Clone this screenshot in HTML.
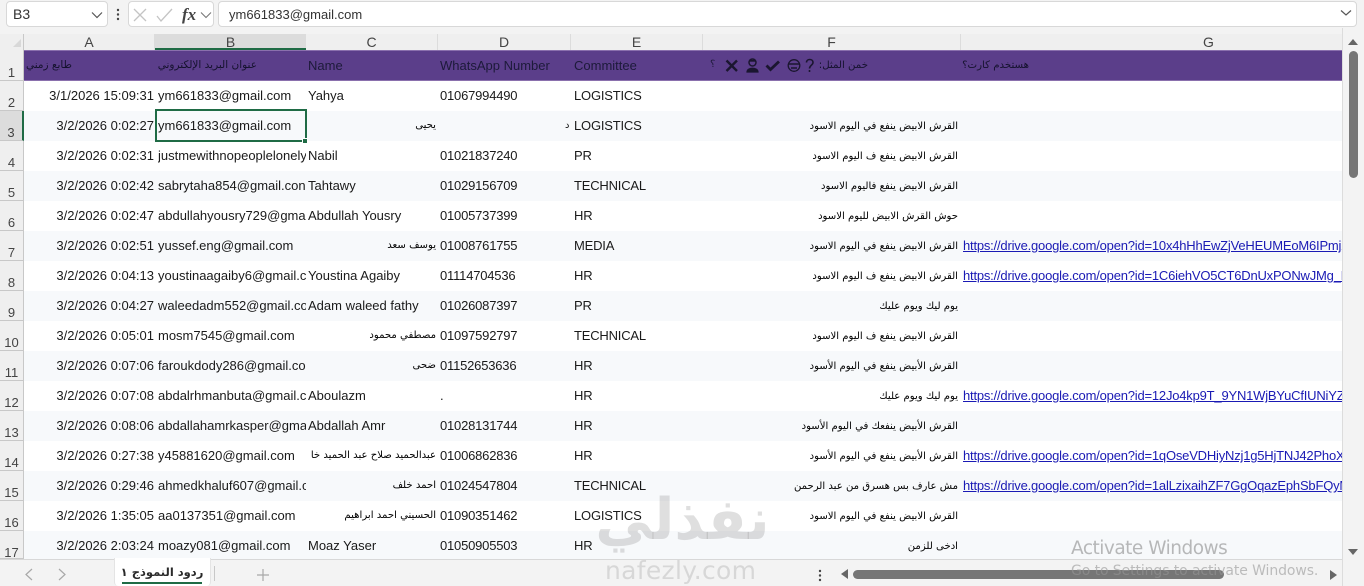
<!DOCTYPE html>
<html lang="en"><head><meta charset="utf-8"><title>Sheet</title>
<style>
html,body{margin:0;padding:0;width:1364px;height:586px;overflow:hidden;background:#f3f3f3;font-family:"Liberation Sans",sans-serif;color:#1a1a1a}
*{box-sizing:border-box}
.abs,.box,.ch,.rh,.r,.c{position:absolute}
.box{background:#fff;border:1px solid #d8d8d8;border-radius:4px;top:1px;height:26px}
.ch{top:34px;height:17px;background:#efefef;color:#444;font-size:14px;line-height:16px;text-align:center;border-right:1px solid #dcdcdc}
.rh{left:0;width:24px;height:30px;background:#efefef;color:#444;font-size:13px;text-align:center;line-height:14px;padding-top:15px;border-bottom:1px solid #c8c8c8;border-right:1px solid #c8c8c8}
.r{left:24px;width:1318px;height:30px;background:#fff;overflow:hidden}
.r.t{background:#f7f9fb}
.c{top:0;height:30px;line-height:29px;font-size:13px;white-space:nowrap;overflow:hidden;color:#1a1a1a}
.a{left:0;width:130px;text-align:right}
.b{left:134px;width:148px}
.cc{left:284px;width:128px}
.cr{left:282px;width:130px;text-align:right;direction:rtl;font-family:"DejaVu Sans",sans-serif;font-size:10.100px;line-height:30px;color:#000}
.d{left:416px;width:130px;letter-spacing:-.2px}
.e{left:550px;width:130px;letter-spacing:-.2px}
.f{left:680px;width:254px;text-align:right;direction:rtl;font-family:"DejaVu Sans",sans-serif;font-size:10.100px;line-height:31px;color:#000}
.g{left:939px;width:379px;color:#1a1ab4;text-decoration:underline;letter-spacing:-.2px}
.h{color:#1d1a3a;line-height:29px;font-size:13px}
.hr{font-family:"DejaVu Sans",sans-serif;font-size:10.500px;direction:rtl;text-align:right;white-space:nowrap;color:#15122e}
</style></head><body>

<!-- formula bar -->
<div class="box" style="left:6px;width:102px"></div>
<div class="abs" style="left:13px;top:6px;font-size:14px;color:#333">B3</div>
<svg class="abs" style="left:90px;top:10px" width="14" height="10"><path d="M2 2.500 L7 7.500 L12 2.500" fill="none" stroke="#555" stroke-width="1.200"/></svg>
<svg class="abs" style="left:114px;top:8px" width="8" height="14"><g fill="#444"><circle cx="4" cy="2" r="1.200"/><circle cx="4" cy="6.500" r="1.200"/><circle cx="4" cy="11" r="1.200"/></g></svg>
<div class="box" style="left:128px;width:86px"></div>
<svg class="abs" style="left:132px;top:6px" width="42" height="18"><path d="M2 3 L14 15 M14 3 L2 15 M25 10 L29 15 L40 3" fill="none" stroke="#c4c4c4" stroke-width="1.300"/></svg>
<div class="abs" style="left:182px;top:5px;font:italic bold 17px/19px 'Liberation Serif',serif;color:#444">fx</div>
<svg class="abs" style="left:199px;top:10px" width="14" height="10"><path d="M2 2.500 L7 7.500 L12 2.500" fill="none" stroke="#777" stroke-width="1.100"/></svg>
<div class="box" style="left:218px;width:1139px"></div>
<div class="abs" style="left:229px;top:7px;font-size:13px;color:#333">ym661833@gmail.com</div>
<svg class="abs" style="left:1339px;top:8px" width="14" height="10"><path d="M2 2.500 L7 7 L12 2.500" fill="none" stroke="#555" stroke-width="1.200"/></svg>

<!-- column headers -->
<div class="abs" style="left:0;top:34px;width:24px;height:17px;background:#efefef;border-right:1px solid #c8c8c8"></div>
<svg class="abs" style="left:13px;top:39px" width="9" height="9"><path d="M8 0V8H0Z" fill="#d8d8d8"/></svg>
<div class="ch" style="left:24px;width:131px">A</div>
<div class="ch" style="left:155px;width:151px;height:16px;background:#dcdcdc;border-bottom:2px solid #1f6b45;border-right:0">B</div>
<div class="ch" style="left:306px;width:132px">C</div>
<div class="ch" style="left:438px;width:133px">D</div>
<div class="ch" style="left:571px;width:132px">E</div>
<div class="ch" style="left:703px;width:258px">F</div>
<div class="ch" style="left:961px;width:495px;border-right:0">G</div>

<!-- row headers -->
<div class="rh" style="top:51px">1</div>
<div class="rh" style="top:81px">2</div>
<div class="rh" style="top:111px;background:#dcdcdc;border-right:2px solid #1f6b45">3</div>
<div class="rh" style="top:141px">4</div>
<div class="rh" style="top:171px">5</div>
<div class="rh" style="top:201px">6</div>
<div class="rh" style="top:231px">7</div>
<div class="rh" style="top:261px">8</div>
<div class="rh" style="top:291px">9</div>
<div class="rh" style="top:321px">10</div>
<div class="rh" style="top:351px">11</div>
<div class="rh" style="top:381px">12</div>
<div class="rh" style="top:411px">13</div>
<div class="rh" style="top:441px">14</div>
<div class="rh" style="top:471px">15</div>
<div class="rh" style="top:501px">16</div>
<div class="rh" style="top:531px;height:28px">17</div>

<!-- header row -->
<div class="abs" style="left:24px;top:50px;width:1318px;height:31px;background:#5b3e8a;border-top:1px solid #8a70ad;border-bottom:1px solid #8a70ad"></div>
<div class="abs h hr" style="left:26px;top:51px;width:46px;height:30px">طابع زمني</div>
<div class="abs h hr" style="left:158px;top:51px;width:99px;height:30px">عنوان البريد الإلكتروني</div>
<div class="abs h" style="left:308px;top:51px">Name</div>
<div class="abs h" style="left:440px;top:51px">WhatsApp Number</div>
<div class="abs h" style="left:574px;top:51px">Committee</div>
<div class="abs h" style="left:710px;top:50px;font-size:10px">؟</div>
<svg class="abs" style="left:724px;top:57px" width="92" height="17" fill="none" stroke="#1b1630">
<path d="M2.500 3.500 L13 14 M13 3.500 L2.500 14" stroke-width="2.400"/>
<circle cx="28.500" cy="5.500" r="3.500" stroke-width="1.500"/><path d="M23 15 C23 10 34 10 34 15 Z" fill="#1b1630" stroke-width="1.200"/><path d="M25 3.800 H32" stroke-width="1.800"/>
<path d="M42.500 8.500 L46.500 12.500 L55 4.500" stroke-width="2.800"/>
<circle cx="70" cy="8.500" r="5.800" stroke-width="1.300"/><path d="M65 7 H75 M67 11 H73" stroke-width="1.500"/>
<path d="M82.500 5.500 C82.500 1.500 89 1.500 89 5.500 C89 8 85.500 8.500 85.500 11.500 M85.500 13 V15" stroke-width="1.600"/>
</svg>
<div class="abs h hr" style="left:816px;top:51px;width:52px;height:30px;font-size:10.200px">خمن المثل:</div>
<div class="abs h hr" style="left:962px;top:51px;width:67px;height:30px;font-size:10.200px">هستخدم كارت؟</div>

<!-- rows -->
<div class="r" style="top:81px"><div class="c a">3/1/2026 15:09:31</div><div class="c b">ym661833@gmail.com</div><div class="c cc">Yahya</div><div class="c d">01067994490</div><div class="c e">LOGISTICS</div></div>
<div class="r t" style="top:111px"><div class="c a">3/2/2026 0:02:27</div><div class="c b">ym661833@gmail.com</div><div class="c cr">يحيى</div><div class="c" style="left:541px;width:10px;font:10px/30px 'DejaVu Sans',sans-serif">د</div><div class="c e">LOGISTICS</div><div class="c f">القرش الابيض ينفع في اليوم الاسود</div></div>
<div class="r" style="top:141px"><div class="c a">3/2/2026 0:02:31</div><div class="c b">justmewithnopeoplelonely</div><div class="c cc">Nabil</div><div class="c d">01021837240</div><div class="c e">PR</div><div class="c f">القرش الابيض ينفع ف اليوم الاسود</div></div>
<div class="r t" style="top:171px"><div class="c a">3/2/2026 0:02:42</div><div class="c b">sabrytaha854@gmail.con</div><div class="c cc">Tahtawy</div><div class="c d">01029156709</div><div class="c e">TECHNICAL</div><div class="c f">القرش الابيض ينفع فاليوم الاسود</div></div>
<div class="r" style="top:201px"><div class="c a">3/2/2026 0:02:47</div><div class="c b">abdullahyousry729@gma</div><div class="c cc">Abdullah Yousry</div><div class="c d">01005737399</div><div class="c e">HR</div><div class="c f">حوش القرش الابيض لليوم الاسود</div></div>
<div class="r t" style="top:231px"><div class="c a">3/2/2026 0:02:51</div><div class="c b">yussef.eng@gmail.com</div><div class="c cr">يوسف سعد</div><div class="c d">01008761755</div><div class="c e">MEDIA</div><div class="c f">القرش الابيض ينفع في اليوم الاسود</div><div class="c g">https://drive.google.com/open?id=10x4hHhEwZjVeHEUMEoM6IPmjXk</div></div>
<div class="r" style="top:261px"><div class="c a">3/2/2026 0:04:13</div><div class="c b">youstinaagaiby6@gmail.c</div><div class="c cc">Youstina Agaiby</div><div class="c d">01114704536</div><div class="c e">HR</div><div class="c f">القرش الابيض ينفع ف اليوم الاسود</div><div class="c g">https://drive.google.com/open?id=1C6iehVO5CT6DnUxPONwJMg_Fab</div></div>
<div class="r t" style="top:291px"><div class="c a">3/2/2026 0:04:27</div><div class="c b">waleedadm552@gmail.co</div><div class="c cc">Adam waleed fathy</div><div class="c d">01026087397</div><div class="c e">PR</div><div class="c f">يوم ليك ويوم عليك</div></div>
<div class="r" style="top:321px"><div class="c a">3/2/2026 0:05:01</div><div class="c b">mosm7545@gmail.com</div><div class="c cr">مصطفي محمود</div><div class="c d">01097592797</div><div class="c e">TECHNICAL</div><div class="c f">القرش الابيض ينفع ف اليوم الاسود</div></div>
<div class="r t" style="top:351px"><div class="c a">3/2/2026 0:07:06</div><div class="c b">faroukdody286@gmail.co</div><div class="c cr">ضحى</div><div class="c d">01152653636</div><div class="c e">HR</div><div class="c f">القرش الأبيض ينفع في اليوم الأسود</div></div>
<div class="r" style="top:381px"><div class="c a">3/2/2026 0:07:08</div><div class="c b">abdalrhmanbuta@gmail.c</div><div class="c cc">Aboulazm</div><div class="c d">.</div><div class="c e">HR</div><div class="c f">يوم ليك ويوم عليك</div><div class="c g">https://drive.google.com/open?id=12Jo4kp9T_9YN1WjBYuCfIUNiYZab</div></div>
<div class="r t" style="top:411px"><div class="c a">3/2/2026 0:08:06</div><div class="c b">abdallahamrkasper@gma</div><div class="c cc">Abdallah Amr</div><div class="c d">01028131744</div><div class="c e">HR</div><div class="c f">القرش الأبيض ينفعك في اليوم الأسود</div></div>
<div class="r" style="top:441px"><div class="c a">3/2/2026 0:27:38</div><div class="c b">y45881620@gmail.com</div><div class="c cr">عبدالحميد صلاح عبد الحميد خا</div><div class="c d">01006862836</div><div class="c e">HR</div><div class="c f">القرش الأبيض ينفع في اليوم الأسود</div><div class="c g">https://drive.google.com/open?id=1qOseVDHiyNzj1g5HjTNJ42PhoXab</div></div>
<div class="r t" style="top:471px"><div class="c a">3/2/2026 0:29:46</div><div class="c b">ahmedkhaluf607@gmail.c</div><div class="c cr">احمد خلف</div><div class="c d">01024547804</div><div class="c e">TECHNICAL</div><div class="c f">مش عارف بس هسرق من عبد الرحمن</div><div class="c g">https://drive.google.com/open?id=1alLzixaihZF7GgOqazEphSbFQyMab</div></div>
<div class="r" style="top:501px"><div class="c a">3/2/2026 1:35:05</div><div class="c b">aa0137351@gmail.com</div><div class="c cr">الحسيني احمد ابراهيم</div><div class="c d">01090351462</div><div class="c e">LOGISTICS</div><div class="c f">القرش الابيض ينفع في اليوم الاسود</div></div>
<div class="r t" style="top:531px;height:28px"><div class="c a">3/2/2026 2:03:24</div><div class="c b">moazy081@gmail.com</div><div class="c cc">Moaz Yaser</div><div class="c d">01050905503</div><div class="c e">HR</div><div class="c f">ادخى للزمن</div></div>

<!-- selection -->
<div class="abs" style="left:155px;top:109px;width:152px;height:33px;border:2px solid #1f6b45"></div>
<div class="abs" style="left:302px;top:138px;width:6px;height:6px;background:#1f6b45;border:1px solid #fff"></div>

<!-- vertical scrollbar -->
<div class="abs" style="left:1342px;top:28px;width:22px;height:558px;background:#f3f3f3;border-left:1px solid #dcdcdc"></div>
<svg class="abs" style="left:1347px;top:38px" width="12" height="8"><path d="M6 1 L11 7 H1Z" fill="#666"/></svg>
<div class="abs" style="left:1349px;top:51px;width:9px;height:127px;background:#767676;border-radius:5px"></div>
<svg class="abs" style="left:1347px;top:548px" width="12" height="8"><path d="M1 1 H11 L6 7Z" fill="#666"/></svg>

<!-- tab bar -->
<div class="abs" style="left:0;top:559px;width:1342px;height:27px;background:#f3f3f3;border-top:1px solid #d8d8d8"></div>
<svg class="abs" style="left:22px;top:566px" width="48" height="16"><path d="M10 3 L4 8.500 L10 14 M37 3 L43 8.500 L37 14" fill="none" stroke="#a8a8a8" stroke-width="1.200"/></svg>
<div class="abs" style="left:114px;top:558px;width:97px;height:28px;background:#fff;border-radius:0 0 4px 4px;border-left:1px solid #e4e4e4;border-right:1px solid #e4e4e4"></div>
<div class="abs" style="left:112px;top:562px;width:100px;height:20px;text-align:center;font:bold 11.500px/20px 'DejaVu Sans',sans-serif;color:#2a2a2a;direction:rtl;white-space:nowrap">ردود النموذج ١</div>
<div class="abs" style="left:122px;top:582px;width:80px;height:2px;background:#1f6b45"></div>
<div class="abs" style="left:214px;top:566px;width:1px;height:15px;background:#c8c8c8"></div>
<svg class="abs" style="left:256px;top:568px" width="14" height="14"><path d="M7 1 V13 M1 7 H13" stroke="#a8a8a8" stroke-width="1.200"/></svg>
<svg class="abs" style="left:816px;top:569px" width="8" height="14"><g fill="#444"><circle cx="4" cy="2" r="1.200"/><circle cx="4" cy="6.500" r="1.200"/><circle cx="4" cy="11" r="1.200"/></g></svg>
<svg class="abs" style="left:840px;top:569px" width="9" height="10"><path d="M8 0 V10 L1 5Z" fill="#666"/></svg>
<div class="abs" style="left:853px;top:570px;width:371px;height:9px;background:#767676;border-radius:5px"></div>
<svg class="abs" style="left:1329px;top:570px" width="9" height="10"><path d="M1 0 V10 L8 5Z" fill="#666"/></svg>

<!-- watermark -->
<div class="abs" style="left:590px;top:487px;width:185px;height:66px;text-align:center;direction:rtl;font:bold 57px/66px 'DejaVu Sans',sans-serif;color:rgba(120,120,120,.24);white-space:nowrap">نفذلي</div>
<div class="abs" style="left:605px;top:556px;font:25px/30px 'DejaVu Sans',sans-serif;color:rgba(120,120,120,.22);letter-spacing:.3px;white-space:nowrap">nafezly.com</div>

<!-- activate windows -->
<div class="abs" style="left:1071px;top:538px;font:18.500px/22px 'DejaVu Sans',sans-serif;color:rgba(130,130,130,.55);white-space:nowrap;letter-spacing:-.5px">Activate Windows</div>
<div class="abs" style="left:1071px;top:562px;font:14px/18px 'DejaVu Sans',sans-serif;color:rgba(150,150,150,.6);white-space:nowrap;letter-spacing:-.1px">Go to Settings to activate Windows.</div>
</body></html>
